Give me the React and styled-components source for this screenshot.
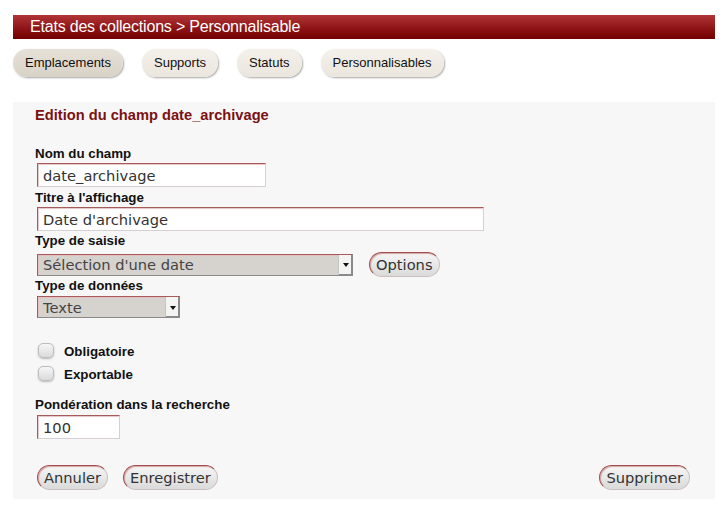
import React from 'react';
import styled, { createGlobalStyle } from 'styled-components';

const Global = createGlobalStyle`
  html, body { margin: 0; padding: 0; background: #fff; }
  body { font-family: "Liberation Sans", Arial, sans-serif; }
  * { box-sizing: border-box; }
`;

const Page = styled.div`
  width: 727px;
  padding-top: 15px;
`;

const Header = styled.h1`
  margin: 0 12px 0 13px;
  height: 24px;
  padding: 0 0 0 17px;
  background: linear-gradient(#b03537, #8e1416 55%, #730000);
  color: #fff;
  font: normal 16px/24px "Liberation Sans", Arial, sans-serif;
  letter-spacing: -0.2px;
`;

const TabBar = styled.nav`
  display: flex;
  gap: 19px;
  margin: 10px 0 0 13px;
`;

const Tab = styled.button`
  height: 28px;
  padding: 0 12px;
  border: none;
  border-radius: 14px;
  background: ${(p) =>
    p.$active
      ? 'linear-gradient(#e6e1d8, #d8d2c6)'
      : 'linear-gradient(#f4f1eb, #ebe6dd)'};
  box-shadow: 1px 1px 2px rgba(0, 0, 0, 0.35);
  font: 13px/26px "Liberation Sans", Arial, sans-serif;
  color: #111;
  cursor: pointer;
`;

const Panel = styled.section`
  margin: 25px 12px 10px 13px;
  background: #f7f7f7;
  padding: 5px 24px 9px 22px;
  display: flex;
  flex-direction: column;
  align-items: flex-start;
`;

const Title = styled.h2`
  margin: 0;
  font: bold 14.67px/17px "Liberation Sans", Arial, sans-serif;
  color: #7b1113;
`;

const Field = styled.div`
  display: flex;
  flex-direction: column;
  align-items: flex-start;
  gap: ${(p) => p.$gap ?? 1}px;
  margin-top: ${(p) => p.$mt}px;
`;

const Label = styled.label`
  font: bold 13.33px/16px "Liberation Sans", Arial, sans-serif;
  color: #111;
`;

const TextInput = styled.input`
  width: ${(p) => p.$w}px;
  height: 24px;
  margin: 0 0 0 2px;
  padding: 0 5px;
  background: #fff;
  border: 1px solid;
  border-color: #a65b5b #d6d0d0 #d6d0d0 #a65b5b;
  box-shadow: inset 1px 1px 0 #e8c8c8;
  font: 14.67px "DejaVu Sans", sans-serif;
  color: #333;
  outline: none;
`;

const Row = styled.div`
  display: flex;
  align-items: center;
  gap: 16px;
  height: 25px;
`;

const SelectWrap = styled.div`
  display: flex;
  width: ${(p) => p.$w}px;
  height: 22px;
  margin-left: 2px;
  border: 1px solid;
  border-color: #a65b5b #8a8a8a #8a8a8a #a65b5b;
  background: #d6d2ce;
  box-shadow: inset 1px 1px 0 #e5c0c0;
`;

const NativeSelect = styled.select`
  flex: 1;
  min-width: 0;
  height: 100%;
  appearance: none;
  border: none;
  background: transparent;
  padding: 0 5px;
  font: 14.67px "DejaVu Sans", sans-serif;
  color: #444;
  outline: none;
`;

const ArrowBox = styled.span`
  width: 14px;
  height: 100%;
  display: flex;
  align-items: center;
  justify-content: center;
  background: #f4f4f4;
  border-left: 1px solid #c4c4c4;
  box-shadow: inset -1px -1px 0 #8a8a8a;
  &::after {
    content: '';
    width: 0;
    height: 0;
    border-left: 3px solid transparent;
    border-right: 3px solid transparent;
    border-top: 4px solid #111;
    margin-top: 1px;
  }
`;

const Button = styled.button`
  height: 25px;
  padding: 0 6px;
  border-radius: 13px;
  border: 1px solid;
  border-color: #a24c4c #cbbfbf #cbbfbf #a24c4c;
  background: linear-gradient(#f6f6f6, #dadada);
  box-shadow: inset 1px 1px 1px rgba(170, 70, 70, 0.45);
  font: 14.67px/23px "DejaVu Sans", sans-serif;
  color: #333;
  cursor: pointer;
`;

const CheckRow = styled.label`
  display: flex;
  align-items: center;
  gap: 10px;
  height: 16px;
  margin: ${(p) => p.$mt}px 0 0 3px;
  font: bold 13.33px/16px "Liberation Sans", Arial, sans-serif;
  color: #111;
`;

const Check = styled.input`
  appearance: none;
  width: 16px;
  height: 15px;
  margin: -3px 0 0;
  border-radius: 5px;
  border: 1px solid #bdbdbd;
  background: linear-gradient(#f6f6f6, #dadada);
  box-shadow: 0 1px 2px rgba(0, 0, 0, 0.25);
`;

const Actions = styled.div`
  align-self: stretch;
  display: flex;
  justify-content: space-between;
  margin: 26px 1px 0 2px;
`;

const Group = styled.div`
  display: flex;
  gap: 15px;
`;

function Select({ width, value }) {
  return (
    <SelectWrap $w={width}>
      <NativeSelect defaultValue={value}>
        <option>{value}</option>
      </NativeSelect>
      <ArrowBox />
    </SelectWrap>
  );
}

export default function App() {
  return (
    <Page>
      <Global />
      <Header>Etats des collections &gt; Personnalisable</Header>
      <TabBar>
        <Tab $active>Emplacements</Tab>
        <Tab>Supports</Tab>
        <Tab>Statuts</Tab>
        <Tab>Personnalisables</Tab>
      </TabBar>
      <Panel>
        <Title>Edition du champ date_archivage</Title>

        <Field $mt={22} $gap={1}>
          <Label>Nom du champ</Label>
          <TextInput $w={229} defaultValue="date_archivage" />
        </Field>

        <Field $mt={3} $gap={1}>
          <Label>Titre à l'affichage</Label>
          <TextInput $w={447} defaultValue="Date d'archivage" />
        </Field>

        <Field $mt={2} $gap={3}>
          <Label>Type de saisie</Label>
          <Row>
            <Select width={316} value="Sélection d'une date" />
            <Button>Options</Button>
          </Row>
        </Field>

        <Field $mt={1} $gap={2}>
          <Label>Type de données</Label>
          <Select width={143} value="Texte" />
        </Field>

        <CheckRow $mt={26}>
          <Check type="checkbox" />
          Obligatoire
        </CheckRow>
        <CheckRow $mt={7}>
          <Check type="checkbox" />
          Exportable
        </CheckRow>

        <Field $mt={14} $gap={2}>
          <Label>Pondération dans la recherche</Label>
          <TextInput $w={83} defaultValue="100" />
        </Field>

        <Actions>
          <Group>
            <Button>Annuler</Button>
            <Button>Enregistrer</Button>
          </Group>
          <Button>Supprimer</Button>
        </Actions>
      </Panel>
    </Page>
  );
}
